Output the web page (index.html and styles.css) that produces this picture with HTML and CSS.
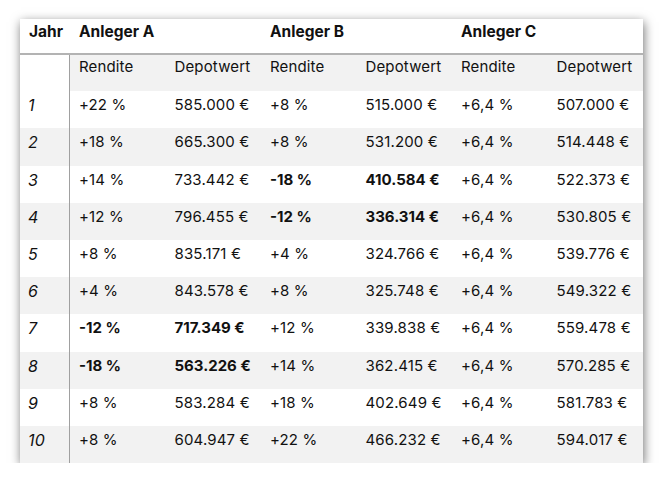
FILE: index.html
```html
<!DOCTYPE html>
<html lang="de">
<head>
<meta charset="utf-8">
<link rel="stylesheet" href="styles.css">
</head>
<body>
<div class="card">
<table class="tbl">
<colgroup>
<col class="c-year"><col class="c"><col class="c"><col class="c"><col class="c"><col class="c"><col class="c">
</colgroup>
<thead>
<tr class="head">
<th>Jahr</th><th colspan="2">Anleger A</th><th colspan="2">Anleger B</th><th colspan="2">Anleger C</th>
</tr>
<tr class="sub">
<td class="year"></td><td>Rendite</td><td>Depotwert</td><td>Rendite</td><td>Depotwert</td><td>Rendite</td><td>Depotwert</td>
</tr>
</thead>
<tbody>
<tr><td class="year">1</td><td>+22 %</td><td>585.000 €</td><td>+8 %</td><td>515.000 €</td><td>+6,4 %</td><td>507.000 €</td></tr>
<tr class="alt tall"><td class="year">2</td><td>+18 %</td><td>665.300 €</td><td>+8 %</td><td>531.200 €</td><td>+6,4 %</td><td>514.448 €</td></tr>
<tr><td class="year">3</td><td>+14 %</td><td>733.442 €</td><td class="b">-18 %</td><td class="b">410.584 €</td><td>+6,4 %</td><td>522.373 €</td></tr>
<tr class="alt"><td class="year">4</td><td>+12 %</td><td>796.455 €</td><td class="b">-12 %</td><td class="b">336.314 €</td><td>+6,4 %</td><td>530.805 €</td></tr>
<tr><td class="year">5</td><td>+8 %</td><td>835.171 €</td><td>+4 %</td><td>324.766 €</td><td>+6,4 %</td><td>539.776 €</td></tr>
<tr class="alt"><td class="year">6</td><td>+4 %</td><td>843.578 €</td><td>+8 %</td><td>325.748 €</td><td>+6,4 %</td><td>549.322 €</td></tr>
<tr class="tall"><td class="year">7</td><td class="b">-12 %</td><td class="b">717.349 €</td><td>+12 %</td><td>339.838 €</td><td>+6,4 %</td><td>559.478 €</td></tr>
<tr class="alt"><td class="year">8</td><td class="b">-18 %</td><td class="b">563.226 €</td><td>+14 %</td><td>362.415 €</td><td>+6,4 %</td><td>570.285 €</td></tr>
<tr><td class="year">9</td><td>+8 %</td><td>583.284 €</td><td>+18 %</td><td>402.649 €</td><td>+6,4 %</td><td>581.783 €</td></tr>
<tr class="alt"><td class="year">10</td><td>+8 %</td><td>604.947 €</td><td>+22 %</td><td>466.232 €</td><td>+6,4 %</td><td>594.017 €</td></tr>
</tbody>
</table>
</div>
</body>
</html>
```

FILE: styles.css
```css
html, body {
  margin: 0;
  padding: 0;
  background: #ffffff;
}
body {
  padding: 19px 0 0 20px;
  font-family: "Inter", "Liberation Sans", sans-serif;
  color: #111111;
}
.card {
  width: 623px;
  height: 444px;
  overflow: hidden;
  background: #ffffff;
  box-shadow: 1px 3px 10px rgba(0, 0, 0, 0.55);
}
.tbl {
  width: 623px;
  table-layout: fixed;
  border-collapse: separate;
  border-spacing: 0;
  font-size: 15px;
  letter-spacing: 0.15px;
}
.c-year { width: 50px; }
.c { width: 95.5px; }
.tbl th, .tbl td {
  padding: 0 0 0 9px;
  text-align: left;
  vertical-align: top;
  white-space: nowrap;
  line-height: 18px;
}
.head th {
  height: 36px;
  box-sizing: border-box;
  padding-top: 4px;
  font-weight: 700;
  font-size: 15.5px;
  letter-spacing: 0;
  border-bottom: 2px solid #b3b3b3;
}
.sub td {
  height: 36px;
  box-sizing: border-box;
  padding-top: 3px;
  background: #f2f2f2;
}
.tbl tbody td {
  height: 37px;
  box-sizing: border-box;
  padding-top: 5px;
}
.tbl tbody tr.tall td { height: 38px; }
.tbl tbody tr.alt td { background: #f2f2f2; }
.tbl td.year {
  font-style: italic;
  font-size: 16px;
  padding-left: 8px;
  border-right: 1px solid #a0a0a0;
}
.sub td.year { background: #ffffff; }
.tbl td.b { font-weight: 700; letter-spacing: 0; }
```
